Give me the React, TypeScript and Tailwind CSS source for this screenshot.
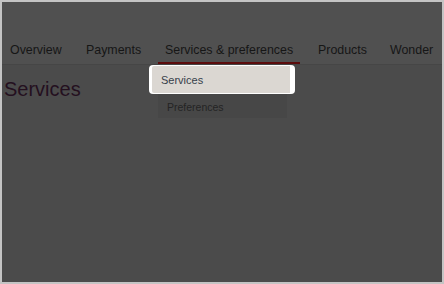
const tabs = [
  { label: 'Overview', width: 'w-[65px]' },
  { label: 'Payments', width: 'w-[68px]' },
  { label: 'Services & preferences', width: 'w-[142px]', active: true },
  { label: 'Products', width: 'w-[61px]' },
  { label: 'Wonder', width: 'w-[60px]' },
]

function TabBar() {
  return (
    <nav className="flex gap-[11px] bg-[#505050] pl-[1px] pt-[36px] border-b border-[#464646]">
      {tabs.map((tab) => (
        <div
          key={tab.label}
          className={`${tab.width} shrink-0 h-[26px] flex items-center pl-[7px] whitespace-nowrap border-b-2 ${
            tab.active ? 'border-[#5c0d0d]' : 'border-transparent'
          }`}
        >
          <span className="text-[12.4px] text-[#161616]">{tab.label}</span>
        </div>
      ))}
    </nav>
  )
}

function SubMenu() {
  return (
    <>
      <div className="absolute left-[156px] top-[92px] w-[129px] h-[24px] bg-[#474747] flex items-center pl-[9px] pt-[3px]">
        <span className="text-[10.5px] text-[#242424]">Preferences</span>
      </div>
      <div className="absolute left-[147px] top-[63px] w-[146px] h-[29px] rounded-[4px] bg-white pl-[3px] pr-[5px] py-[1px]">
        <div className="h-full bg-[#dbd7d2] rounded-l-[2px] flex items-center pl-[9px] pt-[2px]">
          <span className="text-[11px] text-[#36404a]">Services</span>
        </div>
      </div>
    </>
  )
}

export default function App() {
  return (
    <div
      className="w-[444px] h-[284px] bg-[#c4c4c4] p-[2px]"
      style={{ fontFamily: '"Liberation Sans", Arial, sans-serif' }}
    >
      <div className="relative h-full bg-[#4b4b4b] overflow-hidden">
        <TabBar />
        <h1 className="pl-[2px] pt-[13px] text-[20px] leading-[23px] text-[#24101f]">
          Services
        </h1>
        <SubMenu />
      </div>
    </div>
  )
}
